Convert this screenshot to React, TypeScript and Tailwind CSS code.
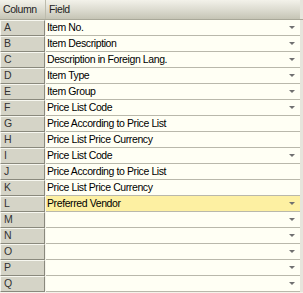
import React from "react";

interface Row {
  col: string;
  field: string;
  dropdown: boolean;
  active?: boolean;
}

const rows: Row[] = [
  { col: "A", field: "Item No.", dropdown: true },
  { col: "B", field: "Item Description", dropdown: true },
  { col: "C", field: "Description in Foreign Lang.", dropdown: true },
  { col: "D", field: "Item Type", dropdown: true },
  { col: "E", field: "Item Group", dropdown: true },
  { col: "F", field: "Price List Code", dropdown: true },
  { col: "G", field: "Price According to Price List", dropdown: false },
  { col: "H", field: "Price List Price Currency", dropdown: false },
  { col: "I", field: "Price List Code", dropdown: true },
  { col: "J", field: "Price According to Price List", dropdown: false },
  { col: "K", field: "Price List Price Currency", dropdown: false },
  { col: "L", field: "Preferred Vendor", dropdown: true, active: true },
  { col: "M", field: "", dropdown: true },
  { col: "N", field: "", dropdown: true },
  { col: "O", field: "", dropdown: true },
  { col: "P", field: "", dropdown: true },
  { col: "Q", field: "", dropdown: true },
];

function Arrow() {
  return (
    <svg width="6" height="3" viewBox="0 0 6 3" className="shrink-0">
      <path d="M0 0h6L3 3z" fill="#707070" />
    </svg>
  );
}

export default function App() {
  return (
    <div
      className="w-[303px] h-[293px] bg-[#f4f3ea] text-[10.5px] tracking-[-0.4px] text-black overflow-hidden"
      style={{ fontFamily: '"Liberation Sans", Arial, sans-serif' }}
    >
      {/* header */}
      <div className="flex h-[20px] bg-gradient-to-b from-[#f3f2ea] via-[#dddcd1] to-[#c5c4b5] border-b border-[#a9a899]">
        <div className="w-[46px] pl-[3px] flex items-center text-[#222] border-r border-[#bdbcae]">Column</div>
        <div className="flex-1 pl-[3px] flex items-center text-[#222]">Field</div>
        <div className="w-[3px] bg-[#e6e5dc]" />
      </div>

      {/* rows */}
      {rows.map((r) => (
        <div key={r.col} className="flex h-[16px]">
          <div className="w-[45px] flex items-center pl-[3px] bg-[#d5d4c7] text-[#333] border-t border-l border-[#f7f7f0] border-b border-r border-b-[#8a897d] border-r-[#8a897d]">
            {r.col}
          </div>
          <div
            className={`flex-1 ml-[1px] flex items-center pl-[1px] pr-[5px] border-b border-[#b9b8ab] ${
              r.active ? "bg-[#fdf0a2]" : "bg-[#fffff4]"
            }`}
          >
            <span className="flex-1 whitespace-nowrap overflow-hidden">{r.field}</span>
            {r.dropdown && <Arrow />}
          </div>
          <div className="w-[3px] bg-[#e6e5dc]" />
        </div>
      ))}
    </div>
  );
}
